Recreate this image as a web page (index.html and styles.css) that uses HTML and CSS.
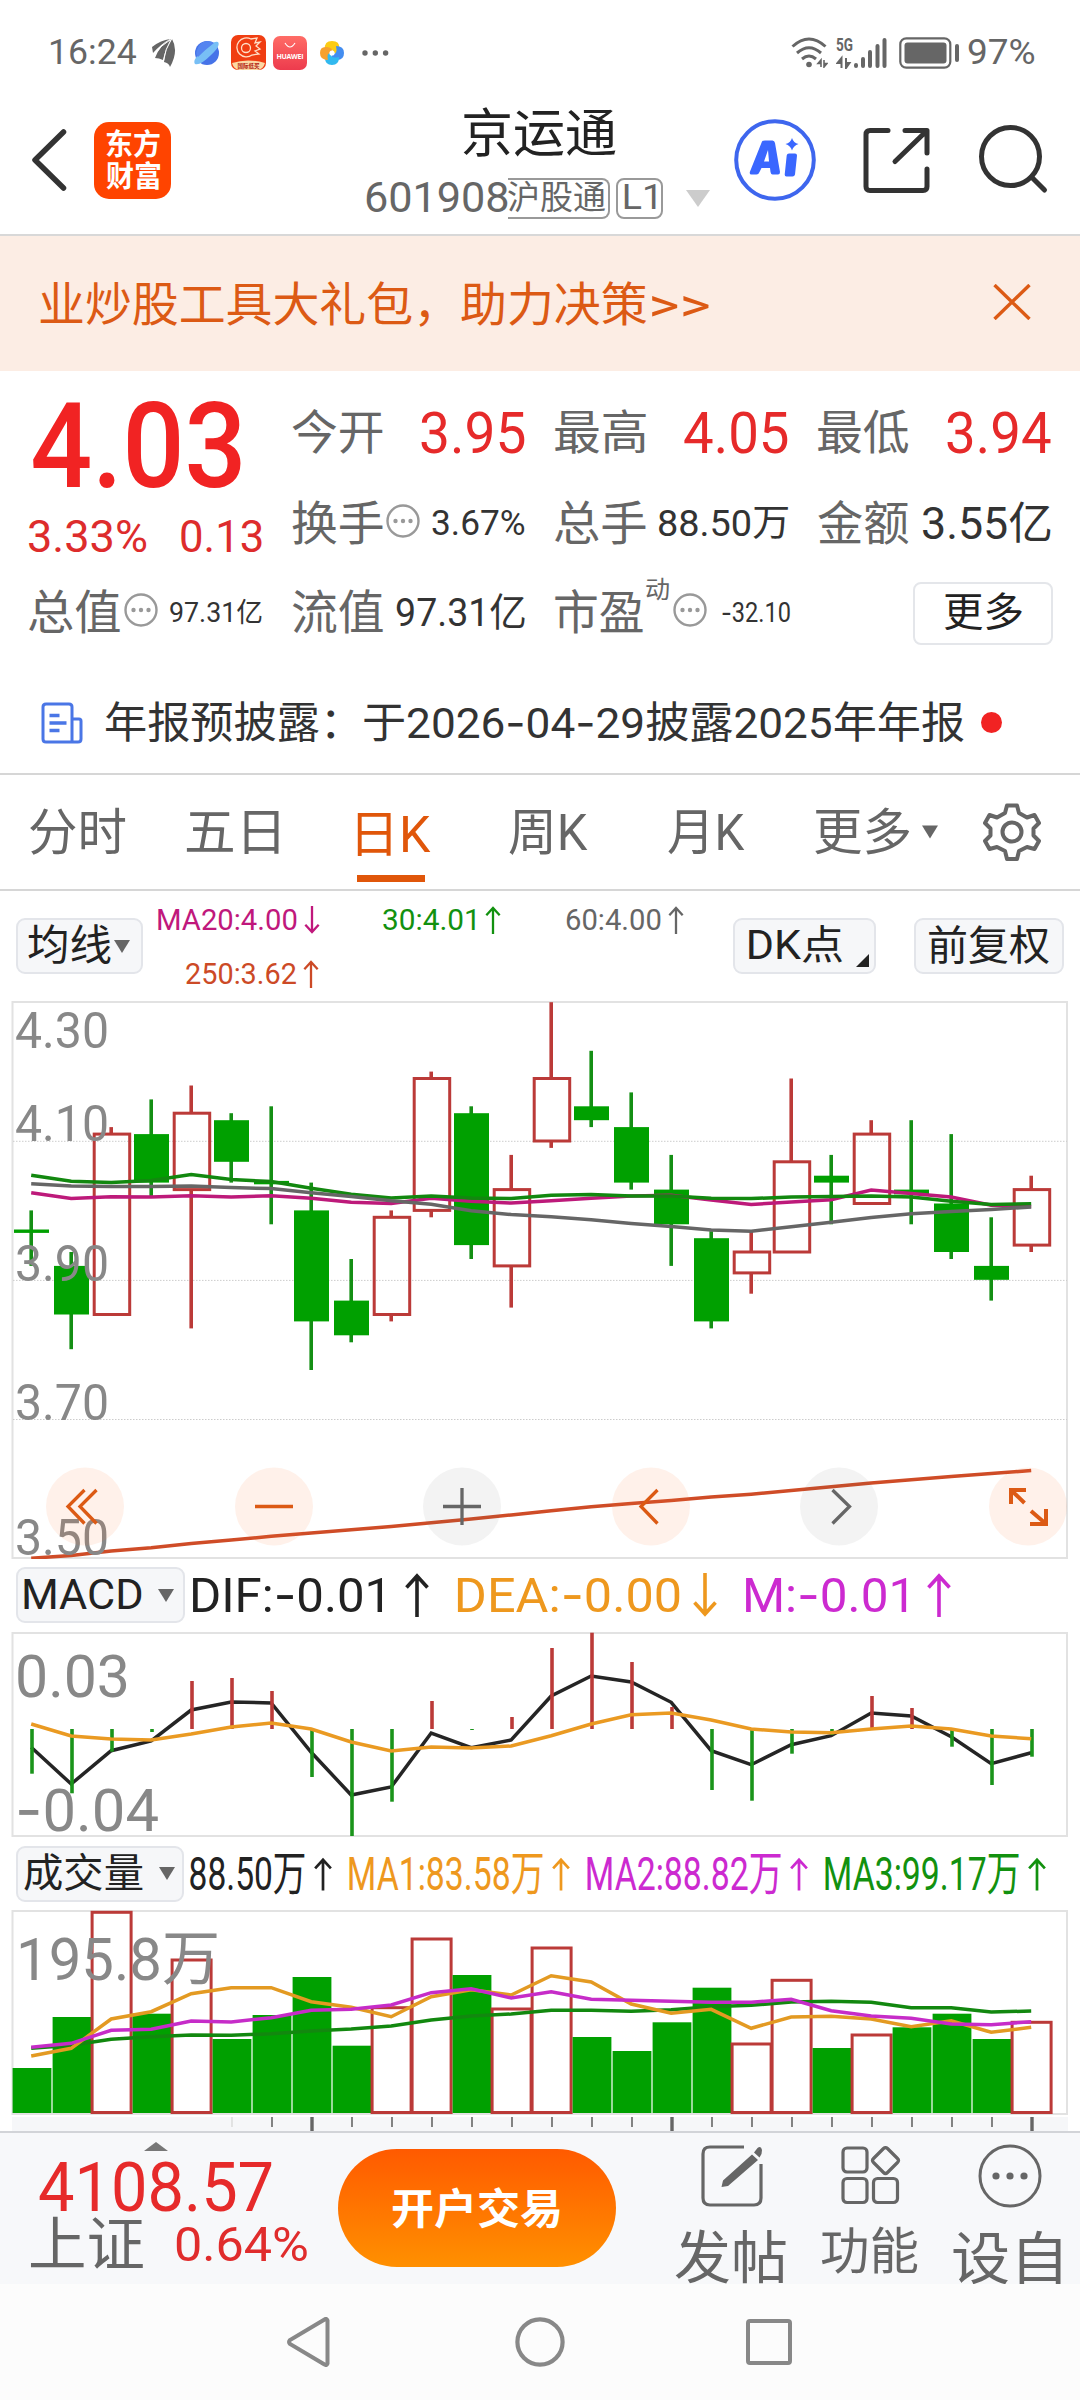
FILE: index.html
```html
<!DOCTYPE html>
<html lang="zh-CN">
<head>
<meta charset="utf-8">
<title>京运通 601908</title>
<link rel="stylesheet" href="styles.css">
</head>
<body>
<svg class="defs" width="0" height="0">
  <symbol id="up" viewBox="0 0 24 44"><path d="M12 44V3M1.5 14.5 12 3l10.500 11.500" fill="none" stroke="currentColor" stroke-width="3.600"/></symbol>
  <symbol id="down" viewBox="0 0 24 44"><path d="M12 0v41M1.500 29.500 12 41l10.500-11.500" fill="none" stroke="currentColor" stroke-width="3.600"/></symbol>
  <symbol id="tri" viewBox="0 0 16 13"><path d="M0 0h16L8 13z" fill="currentColor"/></symbol>
  <symbol id="info" viewBox="0 0 34 34"><circle cx="17" cy="17" r="15.500" fill="none" stroke="#999" stroke-width="2.400"/><g fill="#999"><circle cx="9.500" cy="17" r="2.200"/><circle cx="17" cy="17" r="2.200"/><circle cx="24.500" cy="17" r="2.200"/></g></symbol>
</svg>

<div class="status">
  <span class="t clock" data-w="86">16:24</span>
  <svg class="st-feather" width="26" height="30" viewBox="0 0 26 30" fill="#666"><path d="M0 9Q9 2 18 1Q9 6 1 15Z"/><path d="M3 20Q7 8 19 1Q13 12 11 22Q7 20 3 20Z"/><path d="M12 24Q13 10 20 1Q27 13 18 29Q17 25 12 24Z"/><path d="M2 17Q9 7 18 2M11.500 23Q13 11 19.500 1" stroke="#fff" stroke-width="1" fill="none"/></svg>
  <svg class="st-planet" width="26" height="26" viewBox="0 0 26 26"><circle cx="13" cy="13" r="12" fill="#4673e8"/><path d="M1 24Q-2 20 8 11Q20 0 24 2Q27 6 17 15Q6 26 1 24Z" fill="#78bff5"/><path d="M3 10Q5 2 13 1Q18 1 20 3Q12 9 4 17Q1 14 3 10Z" fill="#5585f0"/></svg>
  <svg class="st-app" width="35" height="35" viewBox="0 0 35 35"><rect width="35" height="35" rx="7" fill="#f03e12"/><g fill="none" stroke="#ffe0c8" stroke-width="1.300"><circle cx="15" cy="13" r="4.500"/><path d="M20 4A9.500 9.500 0 1 0 21 20l7-1-4-3 5-2-4-3 4-4-5 1 2-5z"/></g><path d="M1 28q16-5 33 0-2 7-8 7H9q-6 0-8-7z" fill="#fbd9a5"/><text x="6.500" y="33" class="tiny-red">国际低买</text></svg>
  <svg class="st-hw" width="34" height="34" viewBox="0 0 34 34"><defs><linearGradient id="hw" x2="0" y2="1"><stop stop-color="#ff6c66"/><stop offset="1" stop-color="#ed3b4d"/></linearGradient></defs><rect width="34" height="34" rx="7" fill="url(#hw)"/><path d="M12 7q5 8 10 0" fill="none" stroke="#fff" stroke-width="1.200"/><text x="3.500" y="22.500" class="tiny-white" textLength="27">HUAWEI</text></svg>
  <svg class="st-flower" width="26" height="26" viewBox="0 0 26 26"><path d="M6 9Q5 1 13 1t7 7-6 5Q15 8 6 9z" fill="#fccc14"/><path d="M17 6Q25 6 25 13t-7 7-5-6q6 1 4-8z" fill="#438df0"/><path d="M20 17q0 8-7 8t-7-7 6-5q-1 6 8 4z" fill="#31b9ef"/><path d="M9 20Q1 20 1 13t7-6 5 6Q7 12 9 20z" fill="#f6a12d"/><circle cx="13" cy="13" r="2.600" fill="#fff"/></svg>
  <svg class="st-dots" width="27" height="6" viewBox="0 0 27 6" fill="#666"><circle cx="3" cy="3" r="2.700"/><circle cx="13.300" cy="3" r="2.700"/><circle cx="23.600" cy="3" r="2.700"/></svg>
  <svg class="st-wifi" width="37" height="31" viewBox="0 0 37 31"><g fill="none" stroke="#666" stroke-width="3"><path d="M1.500 9.500Q18 -5.500 34.500 9.500"/><path d="M6 16q12-10.500 24 0"/><path d="M11 22q7-6 14 0"/></g><circle cx="18" cy="27.500" r="2.800" fill="#666"/><path d="M30 30v-7l-3 3.500H30M33 23v7l3-3.500h-3" stroke="#666" stroke-width="1.600" fill="#666"/></svg>
  <svg class="st-sig" width="51" height="32" viewBox="0 0 51 32"><text x="0" y="14" class="g5" textLength="17" lengthAdjust="spacingAndGlyphs">5G</text><path d="M5.500 31V21l-4 5H5.500M10 21v10l3.500-5H10" stroke="#666" stroke-width="2" fill="#666"/><g stroke="#666" stroke-width="4" stroke-linecap="round"><path d="M20 28v1M27 22v7M34 15v14M41.500 9v20M48.500 3v26"/></g></svg>
  <svg class="st-bat" width="61" height="32" viewBox="0 0 61 32"><rect x="1.300" y="1.300" width="50" height="29.400" rx="6" fill="none" stroke="#666" stroke-width="2.200"/><rect x="5.500" y="5.500" width="42" height="21" rx="3" fill="#666"/><rect x="56" y="7" width="4" height="18" rx="2" fill="#666"/></svg>
  <span class="t clock pct" data-w="67">97%</span>
</div>

<header class="head">
  <svg class="back" width="36" height="62" viewBox="0 0 36 62"><path d="M32.500 3 4 31l28.500 28" fill="none" stroke="#333" stroke-width="5.500" stroke-linecap="round" stroke-linejoin="round"/></svg>
  <div class="logo"><span class="t" data-w="54">东方</span><span class="t" data-w="54">财富</span></div>
  <div class="title">
    <span class="t name" data-w="153">京运通</span>
    <div class="code">
      <span class="t num" data-w="142">601908</span>
      <span class="tag open"><span class="t" data-w="97">沪股通</span></span>
      <span class="tag l1"><span class="t" data-w="32">L1</span></span>
      <svg class="drop" width="24" height="17" viewBox="0 0 16 13" preserveAspectRatio="none"><path d="M0 0h16L8 13z" fill="#ccc"/></svg>
    </div>
  </div>
  <svg class="ai" width="82" height="82" viewBox="0 0 82 82"><circle cx="41" cy="41" r="38.800" fill="none" stroke="#3e66ee" stroke-width="4"/><path fill-rule="evenodd" d="M28 22.500Q29 21.500 31 21.500H38.500Q40.500 21.500 41 24L46 53Q46 55.500 44 55.500H38.500Q37 55.500 36.500 53L36 49H27.500L25.500 53Q24.500 55.500 22.500 55.500H17.500Q15 55.500 16 52.500ZM30 42.500H35L34 31Z" fill="#3a67ff"/><path d="M55 34.500h6q2 0 2 2l-2 19q-.500 2-2.500 2h-6q-2 0-1.800-2l2-19q.300-2 2.300-2zM58 19q1.500 5 6.500 6-5 1.500-6.500 6.500-1.500-5-6.500-6.500 5-1 6.500-6z" fill="#3a67ff"/></svg>
  <svg class="share" width="67" height="67" viewBox="0 0 67 67" fill="none" stroke="#333" stroke-width="5" stroke-linecap="round" stroke-linejoin="round"><path d="M25 3.500H7q-4 0-4 4v52q0 4 4 4h53q4 0 4-4V42"/><path d="M42 3.500h22V26M63 4.500 32 34.500"/></svg>
  <svg class="search" width="70" height="70" viewBox="0 0 70 70" fill="none" stroke="#333" stroke-width="5" stroke-linecap="round"><circle cx="31.500" cy="32.500" r="29"/><path d="M52.500 53 65.500 66"/></svg>
</header>

<div class="banner">
  <span class="t" data-w="607">业炒股工具大礼包，助力决策</span>
  <span class="t" data-w="57">&gt;&gt;</span>
  <svg width="38" height="36" viewBox="0 0 38 36"><path d="M1.500 1 36.500 35M36.500 1 1.500 35" stroke="#dc5a14" stroke-width="3.400"/></svg>
</div>

<section class="quote">
  <div class="price">
    <span class="t big" data-w="208">4.03</span>
    <div class="chg"><span class="t" data-w="117">3.33%</span><span class="t" data-w="81">0.13</span></div>
  </div>
  <div class="cell"><span class="t lb" data-w="91">今开</span><span class="t v1" data-w="104">3.95</span></div>
  <div class="cell"><span class="t lb" data-w="91">最高</span><span class="t v1" data-w="104">4.05</span></div>
  <div class="cell"><span class="t lb" data-w="91">最低</span><span class="t v1" data-w="104">3.94</span></div>
  <div class="cell"><span class="t lb" data-w="91">换手</span><svg class="inf"><use href="#info"/></svg><span class="t v35" data-w="93">3.67%</span></div>
  <div class="cell"><span class="t lb" data-w="91">总手</span><span class="t v37" data-w="129">88.50万</span></div>
  <div class="cell"><span class="t lb" data-w="91">金额</span><span class="t v44" data-w="128">3.55亿</span></div>
  <div class="cell low"><span class="t lb" data-w="91">总值</span><svg class="inf"><use href="#info"/></svg><span class="t v27" data-w="92">97.31亿</span></div>
  <div class="cell low"><span class="t lb" data-w="91">流值</span><span class="t v38" data-w="129">97.31亿</span></div>
  <div class="cell low pe"><span class="t lb" data-w="88">市盈</span><span class="t dyn" data-w="23">动</span><svg class="inf"><use href="#info"/></svg><span class="t v27" data-w="69">-32.10</span></div>
  <div class="cell low"><span class="more"><span class="t" data-w="78">更多</span></span></div>
</section>

<div class="news">
  <svg width="42" height="42" viewBox="0 0 42 42" fill="none" stroke="#4a76e6" stroke-width="3"><path d="M31 39V5q0-3-3-3H5Q2 2 2 5v32q0 3 3 3h32q3 0 3-3V19q0-2-2-2h-7"/><path d="M8.500 13.500h10M8.500 21h17M8.500 28.500h10" stroke-width="3.400"/></svg>
  <span class="t n1" data-w="229">年报预披露：</span>
  <span class="t n2" data-w="600">于2026-04-29披露2025年年报</span>
  <i class="dot"></i>
</div>

<nav class="tabs">
  <span class="t" data-w="96">分时</span>
  <span class="t tb2" data-w="93">五日</span>
  <span class="on"><span class="t" data-w="74">日K</span></span>
  <span class="t tb4" data-w="79">周K</span>
  <span class="t tb5" data-w="77">月K</span>
  <span class="t tb6" data-w="95">更多</span>
  <svg class="tb7" width="16" height="14"><use href="#tri"/></svg>
  <svg class="gear" width="58" height="58" viewBox="0 0 58 58" fill="none" stroke="#666" stroke-width="4"><path d="M24 2.500h10l2 7.500 8 4.500 7.500-2.500 4.500 8-5.500 5.500v7l5.500 5.500-4.500 8-7.500-2-8 4-2 8H24l-2-8-8-4-7.500 2L2 38l5.500-5.500v-7L2 20l4.500-8 7.500 2.500 8-4.500z" stroke-linejoin="round"/><circle cx="29" cy="29" r="9.500"/></svg>
</nav>

<section class="mas">
  <span class="btn b1"><span class="t" data-w="83">均线</span><svg width="16" height="13"><use href="#tri"/></svg></span>
  <div class="malines">
    <div class="ml">
      <span class="t c20" data-w="139">MA20:4.00</span><svg class="sa c20"><use href="#down"/></svg>
      <span class="t c30" data-w="92">30:4.01</span><svg class="sa c30 wide"><use href="#up"/></svg>
      <span class="t c60" data-w="95">60:4.00</span><svg class="sa c60"><use href="#up"/></svg>
    </div>
    <div class="ml second"><span class="t c250" data-w="110">250:3.62</span><svg class="sa c250"><use href="#up"/></svg></div>
  </div>
  <span class="btn b2"><span class="t" data-w="94">DK点</span><i class="corner"></i></span>
  <span class="btn b3"><span class="t" data-w="120">前复权</span></span>
</section>

<svg id="kline" class="chart" width="1080" height="558" viewBox="0 1001 1080 558"></svg>

<div class="legend macd">
  <span class="btn"><span class="t" data-w="118">MACD</span><svg width="16" height="13"><use href="#tri"/></svg></span>
  <span class="t" data-w="191">DIF:-0.01</span><svg class="ar"><use href="#up"/></svg>
  <span class="t or g1" data-w="223">DEA:-0.00</span><svg class="ar or"><use href="#down"/></svg>
  <span class="t pu g2" data-w="162">M:-0.01</span><svg class="ar pu"><use href="#up"/></svg>
</div>

<svg id="macd" class="chart" width="1080" height="205" viewBox="0 1632 1080 205"></svg>

<div class="legend vol">
  <span class="btn"><span class="t" data-w="119">成交量</span><svg width="16" height="13"><use href="#tri"/></svg></span>
  <span class="t" data-w="115">88.50万</span><svg class="ar n"><use href="#up"/></svg>
  <span class="t or" data-w="194">MA1:83.58万</span><svg class="ar n or"><use href="#up"/></svg>
  <span class="t pu" data-w="194">MA2:88.82万</span><svg class="ar n pu"><use href="#up"/></svg>
  <span class="t gr" data-w="194">MA3:99.17万</span><svg class="ar n gr"><use href="#up"/></svg>
</div>

<svg id="volume" class="chart" width="1080" height="221" viewBox="0 1910 1080 221"></svg>

<footer class="bottom">
  <div class="index">
    <svg class="caret" width="24" height="9" viewBox="0 0 24 9"><path d="M12 0 24 9H0z" fill="#777"/></svg>
    <span class="t pts" data-w="233">4108.57</span>
    <div class="sub"><span class="t sh" data-w="113">上证</span><span class="t pc" data-w="131">0.64%</span></div>
  </div>
  <span class="trade"><span class="t" data-w="168">开户交易</span></span>
  <div class="act a1">
    <svg width="62" height="62" viewBox="0 0 62 62"><path d="M43 2H9Q2 2 2 9v44q0 7 7 7h44q7 0 7-7V19" fill="none" stroke="#666" stroke-width="3.200"/><path d="M51 9.500 57 15 27 41 20.500 42l1.500-6.500zM53 7.500l3.500-4.500Q60 0 61 5l-.500 4-2 3.500z" fill="#666"/></svg>
    <span class="t" data-w="111">发帖</span>
  </div>
  <div class="act a2">
    <svg width="60" height="60" viewBox="0 0 60 60" fill="none" stroke="#666" stroke-width="3.200"><rect x="2" y="3" width="24" height="24" rx="4"/><rect x="2" y="33.500" width="24" height="24" rx="4"/><rect x="32.500" y="33.500" width="24" height="24" rx="4"/><path d="M42.500 3.500q2-2 4 0l10 10q2 2 0 4l-10 10q-2 2-4 0l-10-10q-2-2 0-4z"/></svg>
    <span class="t" data-w="97">功能</span>
  </div>
  <div class="act a3">
    <svg width="64" height="64" viewBox="0 0 64 64"><circle cx="32" cy="32" r="30" fill="none" stroke="#666" stroke-width="3"/><g fill="#666"><circle cx="18" cy="32" r="3.600"/><circle cx="32" cy="32" r="3.600"/><circle cx="46" cy="32" r="3.600"/></g></svg>
    <span class="t" data-w="108">设自</span>
  </div>
</footer>

<div class="sysnav">
  <svg width="44" height="50" viewBox="0 0 44 50"><path d="M40.500 3.500v43q-1 2.500-3 1L3 27q-2-2 0-4L37.500 2.500q2-1.500 3 1z" fill="none" stroke="#888" stroke-width="4"/></svg>
  <svg width="50" height="50" viewBox="0 0 50 50"><circle cx="25" cy="25" r="22.600" fill="none" stroke="#888" stroke-width="4.200"/></svg>
  <svg width="46" height="46" viewBox="0 0 46 46"><rect x="2" y="2" width="42" height="42" rx="2" fill="none" stroke="#888" stroke-width="4"/></svg>
</div>
<script src="charts.js"></script>
</body>
</html>
```
FILE: styles.css
```css
* { box-sizing: border-box; }
body {
  margin: 0; width: 1080px; height: 2400px; overflow: hidden; background: #fff;
  font-family: Roboto, "Noto Sans CJK SC", sans-serif; color: #222;
}
svg { display: block; flex: none; }
.defs { position: absolute; }
.t { display: inline-block; flex: none; white-space: nowrap; }
.t > span { display: inline-block; transform-origin: 0 50%; }
.dash { font-family: Inter, sans-serif; }

.status { display: flex; align-items: center; height: 105px; padding-left: 50px; color: #666; }
.clock { font-size: 35px; line-height: 40px; }
.st-feather { margin-left: 16px; }
.st-planet { margin-left: 16px; }
.st-app { margin-left: 11px; }
.st-hw { margin-left: 7px; }
.st-flower { margin-left: 12px; }
.st-dots { margin-left: 17px; }
.st-wifi { margin-left: 402px; }
.st-sig { margin-left: 8px; }
.st-bat { margin-left: 12px; }
.pct { margin-left: 8px; }
.tiny-red { font: bold 5.500px "Noto Sans CJK SC", sans-serif; fill: #b02010; }
.tiny-white { font: bold 7px "Open Sans", sans-serif; fill: #fff; }
.g5 { font: bold 18px Roboto, sans-serif; fill: #666; }

.head { display: flex; align-items: flex-start; height: 131px; padding-left: 31px; border-bottom: 2px solid #d8d8d8; }
.back { margin-top: 24px; }
.logo {
  display: flex; flex-direction: column; align-items: center; justify-content: center;
  width: 77px; height: 77px; margin: 17px 0 0 27px; border-radius: 15px;
  background: #ff4400; color: #fff; font-size: 29px; font-weight: 700; line-height: 32px;
}
.title { width: 344px; margin-left: 195px; }
.name { margin-left: 97px; font-size: 52px; line-height: 60px; }
.code { display: flex; align-items: center; margin-top: 10px; height: 46px; color: #666; font-size: 42px; line-height: 40px; }
.tag { display: flex; align-items: center; justify-content: center; height: 41px; border: 2px solid #999; border-radius: 8px; font-size: 33px; }
.open { width: 102px; border-left: 0; border-radius: 0 8px 8px 0; justify-content: flex-start; }
.l1 { width: 47px; margin-left: 6px; font-size: 35px; }
.drop { margin-left: 23px; }
.ai { margin: 14px 0 0 24px; }
.share { margin: 22px 0 0 47px; }
.search { margin: 19px 0 0 49px; }

.banner {
  display: flex; align-items: center; height: 135px;
  padding: 2px 0 0 40px; background: #fcede4; color: #dc5a14; font-size: 46.600px; line-height: 60px;
}
.banner .t + .t { margin-left: 5px; }
.banner svg { margin: -5px 0 0 284px; }

.quote {
  display: grid; grid-template-columns: repeat(4, 233px); grid-auto-rows: 91px; column-gap: 30px;
  padding: 16px 0 0 29px; height: 301px; color: #333;
}
.price { grid-row: span 2; color: #f12323; }
.big { display: block; margin: 5px 0 0 4px; font-size: 118px; font-weight: 500; line-height: 110px; }
.chg { display: flex; justify-content: space-between; width: 233px; margin-top: 10px; color: #dd2c2c; font-size: 45px; line-height: 50px; }
.cell { display: flex; align-items: center; justify-content: flex-end; line-height: 60px; }
.low { padding-bottom: 3px; }
.cell > .lb { margin-right: auto; color: #666; font-size: 46.600px; }
.inf { width: 34px; height: 34px; margin: -6px 12px 0 0; }
.v1 { color: #e62a2a; font-size: 58px; }
.v35 { font-size: 35px; }
.v37 { font-size: 37px; }
.v44 { font-size: 44px; }
.v27 { font-size: 27px; }
.v38 { font-size: 39px; }
.cell.pe { justify-content: flex-start; }
.pe > .lb { margin-right: 3px; }
.dyn { margin: -46px 4px 0 0; font-size: 24px; line-height: 30px; color: #666; }
.pe .inf { margin-right: 14px; }
.more {
  display: flex; align-items: center; justify-content: center; width: 140px; height: 63px;
  margin-right: -2px; border: 2px solid #e4e6ea; border-radius: 8px; font-size: 40px; color: #222;
}

.news { display: flex; align-items: center; height: 101px; padding-left: 41px; color: #333; font-size: 43px; line-height: 50px; }
.n1 { margin-left: 23px; }
.n2 { margin-left: 29px; }
.dot { width: 21px; height: 21px; margin-left: 17px; border-radius: 50%; background: #f12323; }

.tabs {
  display: flex; align-items: center; height: 118px; padding-left: 30px;
  border-top: 2px solid #d6d6d6; border-bottom: 2px solid #d6d6d6;
  color: #666; font-size: 50px; line-height: 60px;
}
.tabs > .t { margin-top: 2px; }
.tabs > .tb2 { margin-left: 60px; }
.on {
  align-self: flex-start; width: 68px; height: 107px; margin-left: 78px; padding-top: 30px; color: #e0560a;
  background: linear-gradient(#e0560a, #e0560a) 0 100% / 68px 7px no-repeat;
}
.on .t { height: 60px; }
.tabs > .tb4 { margin-left: 84px; }
.tabs > .tb5 { margin-left: 80px; }
.tabs > .tb6 { margin-left: 70px; }
.tb7 { margin-left: 12px; color: #666; }
.gear { margin-left: 45px; }

.mas { display: flex; align-items: flex-start; height: 110px; padding: 27px 0 0 16px; }
.btn {
  display: flex; align-items: center; flex: none; height: 56px; border: 2px solid #e3e5ea;
  border-radius: 9px; background: #f6f7f9; color: #222; line-height: 52px;
}
.btn svg { color: #666; }
.b1 { width: 127px; padding-left: 10px; font-size: 42px; gap: 3px; }
.malines { width: 575px; margin-top: -14px; color: #666; }
.ml { display: flex; align-items: center; height: 31px; padding-left: 15px; font-size: 30px; line-height: 31px; }
.second { margin-top: 23px; padding-left: 43px; }
.sa { width: 16px; height: 28px; margin-left: 7px; }
.sa.wide { margin-left: 10px; }
.ml .c30.t { margin-left: 63px; }
.ml .c60.t { margin-left: 65px; }
.c20 { color: #c0187c; }
.c30 { color: #12910f; }
.c60 { color: #666; }
.c250 { color: #cc4a26; }
.b2 { width: 143px; margin-left: 15px; padding-left: 14px; font-size: 40px; }
.corner { align-self: flex-end; width: 0; height: 0; margin: 0 0 5px 13px; border-left: 13px solid transparent; border-bottom: 13px solid #222; }
.b3 { width: 150px; margin-left: 38px; justify-content: center; font-size: 41px; }

.legend { display: flex; align-items: center; padding-left: 16px; color: #222; }
.macd { height: 73px; padding-bottom: 1px; font-size: 48px; line-height: 60px; }
.legend .btn { width: 169px; padding-left: 6px; gap: 16px; margin-right: 7px; }
.macd .btn { font-size: 42px; }
.ar { width: 26px; height: 44px; margin-left: 21px; }
.g1 { margin-left: 27px; }
.g2 { margin-left: 27px; }
.g1 + .ar { margin-left: 12px; }
.g2 + .ar { margin-left: 19px; }
.or { color: #ee981e; }
.pu { color: #cc2ad0; }
.gr { color: #12910f; }
.vol { height: 73px; font-size: 47px; line-height: 60px; }
.vol .btn { width: 168px; font-size: 40px; margin-right: 6px; }
.ar.n { width: 18px; margin-left: 9px; }
.vol .n + .t { margin-left: 17px; }

.axis { font-family: Roboto, "Noto Sans CJK SC", sans-serif; fill: #888; }

.bottom {
  display: flex; align-items: flex-start; height: 153px; overflow: hidden;
  border-top: 2px solid #d2d4d8; background: #f7f8fa; color: #666;
}
.index { width: 338px; padding: 9px 0 0 30px; }
.caret { margin-left: 114px; }
.pts { display: block; margin: 11px 0 0 9px; color: #e62a2a; font-size: 68px; line-height: 52px; }
.sub { display: flex; align-items: center; margin-top: 2px; height: 58px; line-height: 58px; }
.sh { font-size: 58px; }
.pc { margin: 0 0 0 33px; color: #e02c2c; font-size: 49px; }
.trade {
  display: flex; align-items: center; justify-content: center; width: 278px; height: 118px; margin-top: 16px; padding: 3px 2px 0 0;
  border-radius: 59px; background: linear-gradient(#ff5a00, #ff9000); color: #fff;
  font-size: 42px; font-weight: 700; line-height: 60px;
}
.act { display: flex; flex-direction: column; align-items: center; font-size: 57px; line-height: 64px; }
.act svg { margin-left: 3px; }
.a1 { margin: 12px 0 0 59px; }
.a1 .t, .a3 .t { margin-top: 20px; }
.a2 { margin: 12px 0 0 35px; font-size: 50px; }
.a2 .t { margin-top: 15px; }
.a3 { margin: 11px 0 0 35px; }
.a3 svg { margin-left: 6px; }
.sysnav { display: flex; align-items: center; height: 116px; background: #fcfcfc; padding-left: 287px; }
.sysnav svg + svg { margin-left: 184px; }
.sysnav svg + svg + svg { margin-left: 181px; }
```
FILE: charts.js
```js
// Shrinks or widens each label so that its glyphs fill the width given in data-w.
// Hyphens are set in a face with a wider dash.
const ctx = document.createElement('canvas').getContext('2d');
document.querySelectorAll('.t').forEach(el => {
  const w = +el.dataset.w, text = el.textContent, cs = getComputedStyle(el);
  ctx.font = `${cs.fontWeight} ${cs.fontSize} ${cs.fontFamily}`;
  const m = ctx.measureText(text);
  const hyphens = text.split('-').length - 1;
  const narrow = ctx.measureText('-').width;
  ctx.font = `${cs.fontWeight} ${cs.fontSize} Inter`;
  const extra = hyphens * (ctx.measureText('-').width - narrow);
  const ink = m.actualBoundingBoxLeft + m.actualBoundingBoxRight + extra;
  const inner = document.createElement('span');
  inner.innerHTML = text.replace(/>/g, '&gt;').replace(/-/g, '<span class="dash">-</span>');
  inner.style.transform = `scaleX(${w / ink}) translateX(${m.actualBoundingBoxLeft}px)`;
  el.textContent = '';
  el.appendChild(inner);
  el.style.width = w + 'px';
});

const GREEN = '#00a000', WICK = '#148f14', RED = '#bb3a38';
const X = i => 31.2 + 40 * i;
const line = (pts, color, w = 3.5) =>
  `<polyline fill="none" stroke="${color}" stroke-width="${w}" points="${pts.map((y, i) => X(i) + ',' + y.toFixed(1)).join(' ')}"/>`;
const vline = (x, a, b, c, w = 3.6) => `<path d="M${x} ${a}V${b}" stroke="${c}" stroke-width="${w}"/>`;
const frame = (y, h) => `<rect x="12.500" y="${y}" width="1054.500" height="${h}" fill="none" stroke="#e2e2e2" stroke-width="2"/>`;
const label = (x, y, size, w, s) =>
  `<text class="axis" x="${x}" y="${y}" font-size="${size}" textLength="${w}" lengthAdjust="spacingAndGlyphs">${s.replace('-', '<tspan class="dash">-</tspan>')}</text>`;

// Daily candles: [colour, body top, body bottom, high, low], prices in cents.
const K = [
  ['g',397,397,400,392],['g',392,385,394,380],['r',411,385,412,385],['g',411,404,416,402],
  ['r',414,403,418,383],['g',413,407,414,404],['g',404,404,415,398],['g',400,384,404,377],
  ['g',387,382,393,381],['r',399,385,400,384],['r',419,400,420,399],['g',414,395,415,393],
  ['r',403,392,408,386],['r',419,410,430,409],['g',415,413,423,412],['g',412,404,417,403],
  ['g',403,398,408,392],['g',396,384,397,383],['r',394,391,397,388],['r',407,394,419,394],
  ['g',405,404,408,398],['r',411,401,413,401],['g',403,402.3,413,398],['g',401,394,411,393],
  ['g',392,390,399,387],['r',403,395,405,394]
];
const py = p => +(1002.2 + (430 - p) * 6.94).toFixed(1);
let s = frame(1002, 556);
[1141.3, 1280.4, 1419.5].forEach(y => s += `<path d="M13 ${y}H1067" stroke="#ccc" stroke-width="1" stroke-dasharray="1.500 1.500"/>`);
K.forEach(([c, t, b, h, l], i) => {
  const x = X(i), T = py(t), B = py(b);
  if (c === 'g') {
    s += vline(x, py(h), py(l), WICK) + `<rect x="${x - 17.2}" y="${T - (T === B ? 1.7 : 0)}" width="35" height="${Math.max(B - T, 3.4)}" fill="${GREEN}"/>`;
  } else {
    s += vline(x, py(h), T, RED) + vline(x, B, py(l), RED) +
      `<rect x="${x - 17}" y="${T}" width="35.500" height="${B - T}" fill="none" stroke="${RED}" stroke-width="3"/>`;
  }
});
const ky = a => a.map(v => 990 + v / 2.7034);
s += line(ky([548,564,559,560,556,560,556,563,574,577,563,571,576,570,563,557,555,568,580,573,567,541,550,560,582,585]), '#bd1a7a');
s += line(ky([501,517,520,515,499,512,518,536,552,562,557,562,564,555,553,557,557,563,564,560,558,557,560,571,580,578]), '#12880f');
s += line(ky([524,530,531,531,530,534,537,548,558,570,579,597,607,613,621,631,639,649,652,640,628,615,605,599,593,587]), '#666');
s += line(ky([1536,1529,1517,1508,1496,1487,1477,1468,1459,1450,1440,1430,1419,1408,1397,1388,1380,1371,1363,1353,1343,1333,1324,1315,1307,1299]), '#cf4c27');
[['4.30',1048],['4.10',1141],['3.90',1281],['3.70',1420],['3.50',1555]].forEach(([v, y]) => s += label(15, y, 50, 94, v));
const icons = [
  ['o','M84.500 1490 68 1506.500 84.500 1523.500M96.500 1490 80 1506.500 96.500 1523.500'], ['o','M255 1506.500H293'],
  ['g','M443 1506.500H481M462 1488V1525'], ['o','M657.500 1490 641 1506.500 657.500 1523.500'],
  ['g','M832.500 1490 849.500 1506.500 832.500 1523.500'],
  ['o','M1011 1504V1490H1026M1011.500 1490.500 1024.500 1503M1046 1509V1524H1030M1045.500 1523.500 1031 1511']
];
icons.forEach(([c, d], i) => {
  const o = c === 'o', w = i === 5 ? 4 : 3.3;
  s += `<circle cx="${[85,274,462,651,839,1028][i]}" cy="1506.500" r="39" fill="${o ? '#ff7a30' : '#666'}" fill-opacity="${o ? .1 : .08}"/>` +
    `<path d="${d}" fill="none" stroke="${o ? '#dc5a14' : '#666'}" stroke-width="${w}"/>`;
});
document.getElementById('kline').innerHTML = s;

// MACD: histogram ends and the two signal lines, in thirds of a pixel.
const my = v => +(1560 + v / 3).toFixed(1);
s = frame(1633, 203);
const hist = [641,700,575,516,363,354,393,651,828,725,423,510,471,264,218,306,441,690,722,581,525,408,444,560,675,590];
s += line([562,672,572,543,450,426,429,577,705,681,519,563,540,408,348,366,427,572,614,554,527,459,468,530,611,578].map(my), '#252525');
hist.forEach((v, i) => s += vline(X(i) + .8, my(507), my(v), v > 507 ? '#1a941a' : RED));
s += line([492,528,537,540,522,501,489,507,546,573,561,564,558,527,492,464,459,480,507,516,518,507,498,507,528,536].map(my), '#ea9a22');
s += label(15, 1697, 60, 115, '0.03') + label(15, 1831, 60, 144, '-0.04');
document.getElementById('macd').innerHTML = s;

// Volume bars with their moving averages.
const vy = v => +(1840 + v / 3).toFixed(1);
s = frame(1911, 203);
const vols = [684,531,217,521,360,597,525,411,617,503,297,405,507,324,591,633,547,443,612,421,624,585,562,521,597,547];
vols.forEach((v, i) => {
  const x = 31.6 + 40 * i, y = vy(v);
  s += K[i][0] === 'g'
    ? `<rect x="${x - 19}" y="${y}" width="38.800" height="${2113 - y}" fill="${GREEN}"/>`
    : `<rect x="${x - 19.5}" y="${y}" width="39" height="${2112.5 - y}" fill="#fff" stroke="${RED}" stroke-width="3"/>`;
});
s += line([625,616,598,590,585,586,581,573,567,558,540,528,522,511,511,514,509,500,496,486,484,487,503,503,516,513].map(vy), '#12880f');
s += line([648,625,537,515,461,443,443,485,502,530,470,449,465,407,426,492,520,508,565,531,529,537,560,542,577,562].map(vy), '#e39a22');
s += line([622,610,571,568,543,546,533,511,508,495,458,446,474,455,478,481,484,487,487,478,512,528,535,552,554,545].map(vy), '#c62cc8');
s += label(16, 1980, 60, 204, '195.8万');
s += '<rect x="12" y="2117" width="1056" height="14" fill="#f6f7f9"/>';
for (let i = 5; i < 26; i++) {
  const big = i === 7 || i === 16 || i === 25;
  s += vline(32 + 40 * i, 2117, big ? 2131 : 2127, i === 5 ? '#ddd' : '#666', big ? 3.4 : 1.6);
}
document.getElementById('volume').innerHTML = s;
```
